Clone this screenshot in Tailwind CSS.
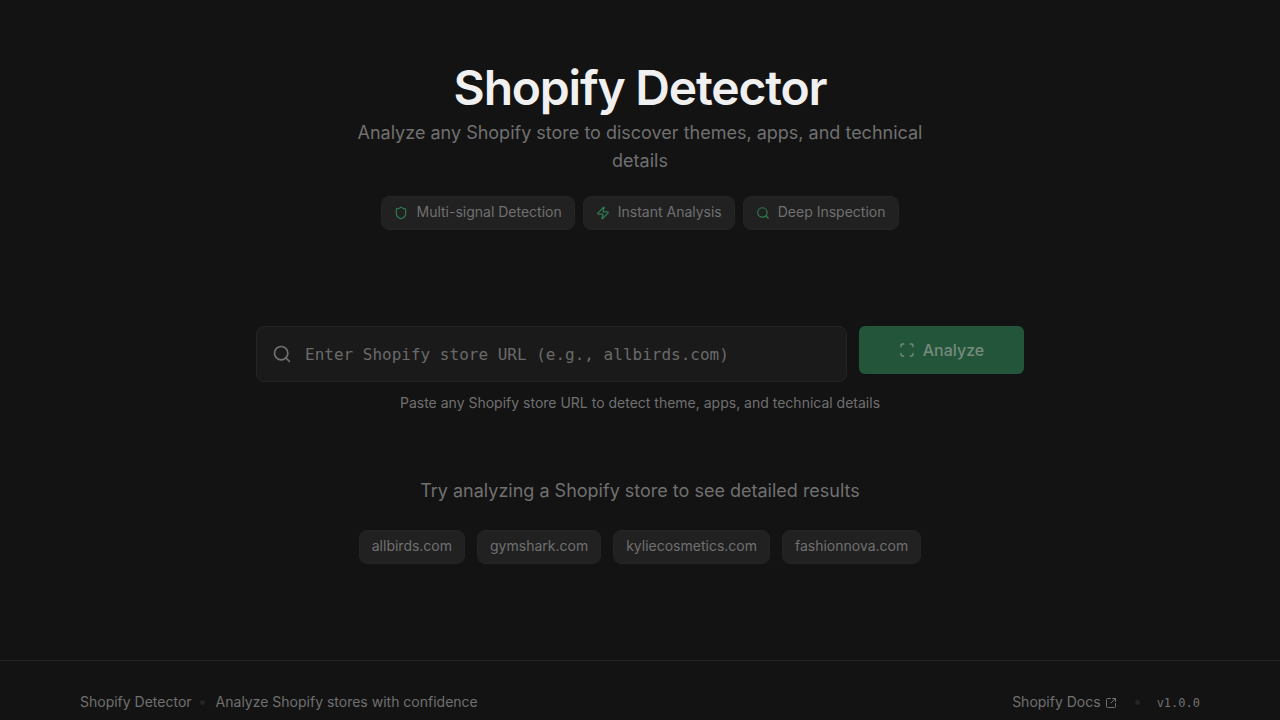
<!DOCTYPE html>
<html lang="en">
<head>
    <meta charset="UTF-8">
    <meta name="viewport" content="width=device-width, initial-scale=1.0">
    <title>Shopify Detector</title>
    <script src="https://cdn.jsdelivr.net/npm/@tailwindcss/browser@4"></script>
</head>
<body class="bg-[#131313] font-['Inter',sans-serif] text-[#707070]">
    <div class="h-screen overflow-hidden flex flex-col">
        <main class="h-[660px] shrink-0 flex flex-col items-center">
            <!-- Hero -->
            <h1 class="mt-[58px] text-[48px] leading-[60px] font-semibold tracking-[-1.2px] text-[#f0f0f0]">Shopify Detector</h1>
            <p class="w-[576px] mt-[1px] text-center text-[18px] leading-[28px]">Analyze any Shopify store to discover themes, apps, and technical details</p>
            <div class="mt-[21px] flex gap-2">
                <div class="h-[34px] flex items-center gap-2 px-3 pb-[2px] rounded-lg bg-[#212121] border border-[#242424] text-sm">
                    <svg class="w-3.5 h-3.5 mt-[2px] text-[#2f7d52]" viewBox="0 0 24 24" fill="none" stroke="currentColor" stroke-width="2" stroke-linecap="round" stroke-linejoin="round"><path d="M20 13c0 5-3.5 7.5-7.66 8.95a1 1 0 0 1-.67-.01C7.5 20.5 4 18 4 13V6a1 1 0 0 1 1-1c2 0 4.5-1.2 6.24-2.72a1.17 1.17 0 0 1 1.52 0C14.51 3.81 17 5 19 5a1 1 0 0 1 1 1z"/></svg>
                    <span>Multi-signal Detection</span>
                </div>
                <div class="h-[34px] flex items-center gap-2 px-3 pb-[2px] rounded-lg bg-[#212121] border border-[#242424] text-sm">
                    <svg class="w-3.5 h-3.5 mt-[2px] text-[#2f7d52]" viewBox="0 0 24 24" fill="none" stroke="currentColor" stroke-width="2" stroke-linecap="round" stroke-linejoin="round"><path d="M4 14a1 1 0 0 1-.78-1.63l9.9-10.2a.5.5 0 0 1 .86.46l-1.92 6.02A1 1 0 0 0 13 10h7a1 1 0 0 1 .78 1.63l-9.9 10.2a.5.5 0 0 1-.86-.46l1.92-6.02A1 1 0 0 0 11 14z"/></svg>
                    <span>Instant Analysis</span>
                </div>
                <div class="h-[34px] flex items-center gap-2 px-3 pb-[2px] rounded-lg bg-[#212121] border border-[#242424] text-sm">
                    <svg class="w-3.5 h-3.5 mt-[2px] text-[#2f7d52]" viewBox="0 0 24 24" fill="none" stroke="currentColor" stroke-width="2" stroke-linecap="round" stroke-linejoin="round"><circle cx="11" cy="11" r="8"/><path d="m21 21-4.3-4.3"/></svg>
                    <span>Deep Inspection</span>
                </div>
            </div>

            <!-- Search -->
            <div class="mt-[96px] w-[768px] flex items-start gap-3">
                <div class="flex-1 h-14 flex items-center rounded-lg bg-[#1a1a1a] border border-[#242424] pl-[15px] pr-4">
                    <svg class="w-5 h-5 shrink-0 text-[#707070]" viewBox="0 0 24 24" fill="none" stroke="currentColor" stroke-width="2" stroke-linecap="round" stroke-linejoin="round"><circle cx="11" cy="11" r="8"/><path d="m21 21-4.3-4.3"/></svg>
                    <span class="ml-[13px] mt-[2px] font-['DejaVu_Sans_Mono',monospace] text-base text-[#6a6a6a]">Enter Shopify store URL (e.g., allbirds.com)</span>
                </div>
                <button class="w-[165px] h-12 flex items-center justify-center gap-2 rounded-md bg-[#225539] text-[#768a7e] font-medium text-base">
                    <svg class="w-4 h-4" viewBox="0 0 24 24" fill="none" stroke="currentColor" stroke-width="2" stroke-linecap="round" stroke-linejoin="round"><path d="M3 7V5a2 2 0 0 1 2-2h2"/><path d="M17 3h2a2 2 0 0 1 2 2v2"/><path d="M21 17v2a2 2 0 0 1-2 2h-2"/><path d="M7 21H5a2 2 0 0 1-2-2v-2"/></svg>
                    <span>Analyze</span>
                </button>
            </div>
            <p class="mt-[11px] text-sm leading-5">Paste any Shopify store URL to detect theme, apps, and technical details</p>

            <!-- Examples -->
            <p class="mt-[64px] text-[18px] leading-[28px]">Try analyzing a Shopify store to see detailed results</p>
            <div class="mt-[25px] flex gap-3">
                <div class="h-[34px] flex items-center px-3 pb-[2px] rounded-lg bg-[#212121] border border-[#242424] text-sm">allbirds.com</div>
                <div class="h-[34px] flex items-center px-3 pb-[2px] rounded-lg bg-[#212121] border border-[#242424] text-sm">gymshark.com</div>
                <div class="h-[34px] flex items-center px-3 pb-[2px] rounded-lg bg-[#212121] border border-[#242424] text-sm">kyliecosmetics.com</div>
                <div class="h-[34px] flex items-center px-3 pb-[2px] rounded-lg bg-[#212121] border border-[#242424] text-sm">fashionnova.com</div>
            </div>
        </main>

        <!-- Footer -->
        <footer class="border-t border-[#262626] px-20 pt-[31px] flex justify-between items-center text-sm">
            <div class="flex items-center gap-2 leading-5">
                <span>Shopify Detector</span>
                <span class="w-2 flex justify-start"><span class="w-[5px] h-[5px] mt-[1px] rounded-full bg-[#242424]"></span></span>
                <span>Analyze Shopify stores with confidence</span>
            </div>
            <div class="flex items-center leading-5">
                <span>Shopify Docs</span>
                <svg class="ml-1 w-3 h-3 mt-[2px]" viewBox="0 0 24 24" fill="none" stroke="currentColor" stroke-width="2" stroke-linecap="round" stroke-linejoin="round"><path d="M21 13v6a2 2 0 0 1-2 2H5a2 2 0 0 1-2-2V5a2 2 0 0 1 2-2h6"/><path d="m21 3-9 9"/><path d="M15 3h6v6"/></svg>
                <span class="ml-[18px] w-[5px] h-[5px] rounded-full bg-[#242424]"></span>
                <span class="ml-[17px] mt-[2px] font-['DejaVu_Sans_Mono',monospace] text-xs">v1.0.0</span>
            </div>
        </footer>
    </div>
</body>
</html>
